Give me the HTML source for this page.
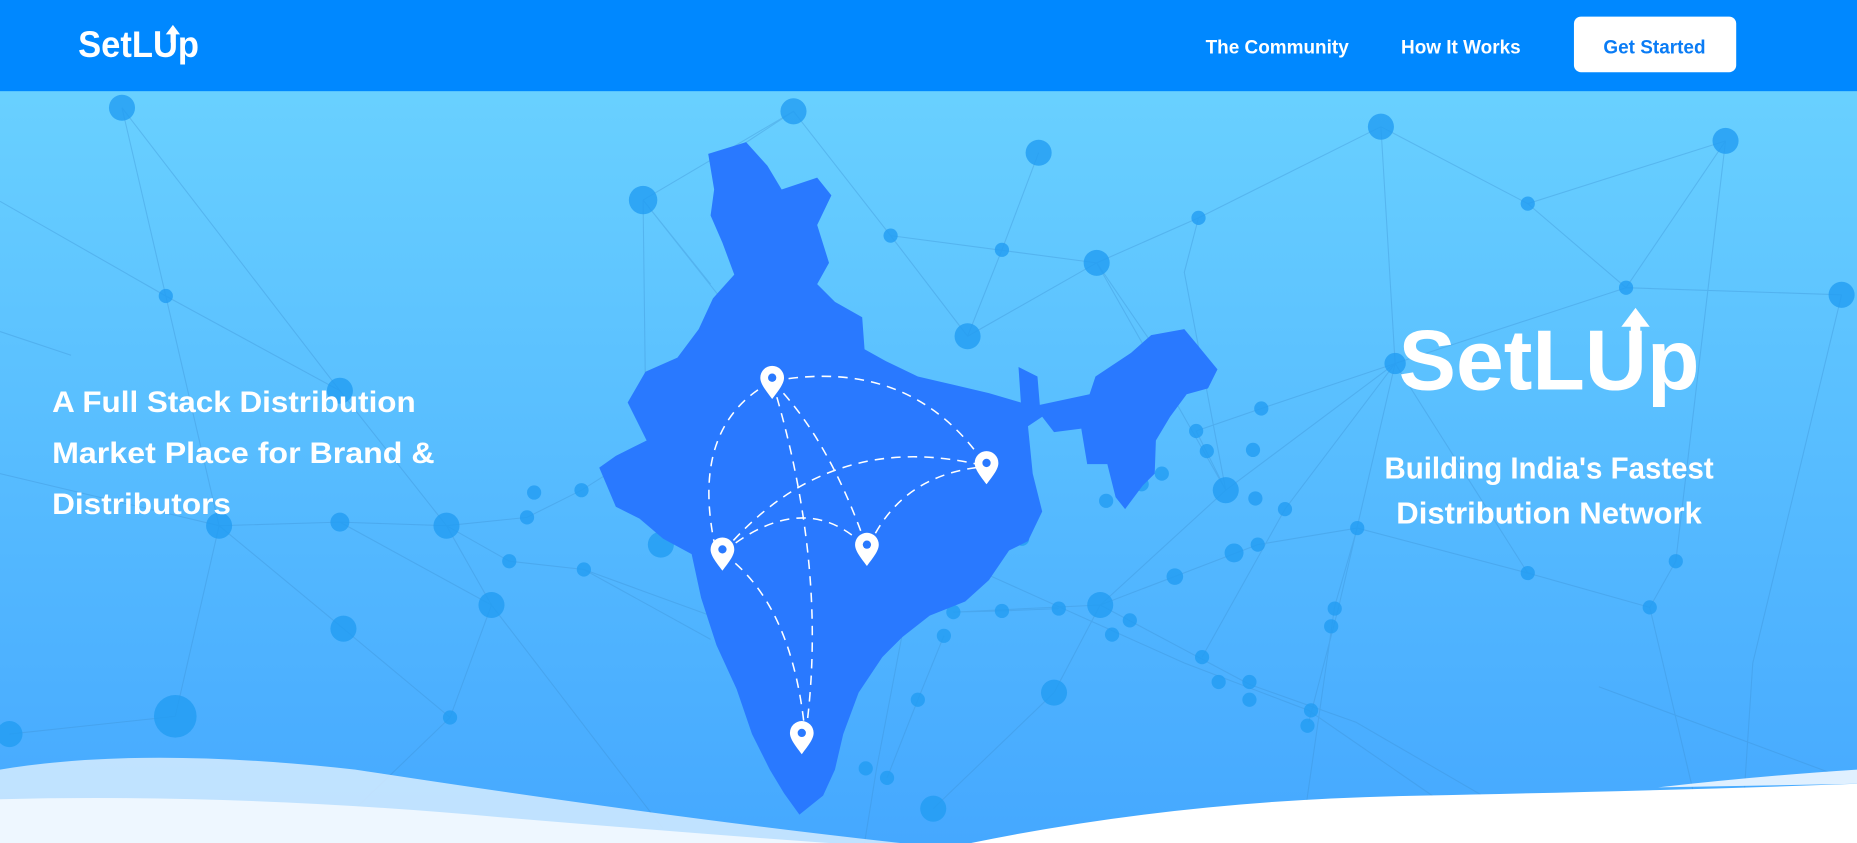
<!DOCTYPE html>
<html><head><meta charset="utf-8"><style>
html,body{margin:0;padding:0;width:1857px;height:843px;overflow:hidden;background:#fff}
svg{display:block}
text{font-family:"Liberation Sans",sans-serif;font-weight:bold;fill:#fff}
</style></head><body>
<svg width="1857" height="843" viewBox="0 0 1568 712" preserveAspectRatio="none">
<defs>
<linearGradient id="bg" x1="0" y1="0" x2="0" y2="1">
<stop offset="0" stop-color="#6dd5ff"/><stop offset="1" stop-color="#45a8ff"/>
</linearGradient>
<g id="pin"><path d="M0,0 C-6,-8 -10,-13 -10,-18 A10,10 0 1 1 10,-18 C10,-13 6,-8 0,0Z" fill="#fff"/><circle cx="0" cy="-18" r="3.5" fill="#2979ff"/></g>
</defs>
<rect x="0" y="0" width="1568" height="712" fill="url(#bg)"/>
<g stroke="#3b8fd0" stroke-opacity="0.35" stroke-width="0.9" fill="none">
<path d="M103,91 L140,250 L185,444 L148,605 M103,91 L287,330 L377,444 M0,170 L140,250 M140,250 L287,330 M543,169 L670,94 L752,199 L817,284 L926,222 L1012,184 L1166,107 L1290,172 L1457,119 M543,169 L545,330 M543,169 L615,260 M543,169 L600,240 M877,129 L846,211 L817,284 M752,199 L926,222 M926,222 L1035,414 M926,222 L1000,330 M1166,107 L1178,307 L1373,243 L1457,119 M1290,172 L1373,243 L1555,249 M1373,243 L1178,307 M1178,307 L1035,414 L929,511 L890,585 L788,683 M1178,307 L1085,430 L1015,555 M1178,307 L1290,484 L1393,513 L1415,474 L1457,119 M1178,307 L1130,514 L1105,610 M1178,307 L1065,345 L1010,364 L1035,414 M377,444 L445,437 L491,414 L545,380 M377,444 L430,474 L493,481 L600,540 M377,444 L415,511 L380,606 L270,712 M185,444 L287,441 L377,444 M185,444 L290,531 L380,606 M0,400 L185,444 M8,620 L148,605 M929,511 L1062,460 L1146,446 L1290,484 M929,511 L805,517 L846,516 L894,514 M929,511 L1055,578 L1145,610 L1300,700 M822,480 L1000,560 L1105,600 L1250,700 M765,519 L740,650 L730,712 M797,537 L775,591 L749,657 M0,280 L60,300 M1415,474 L1393,513 L1440,712 M1555,249 L1480,560 L1470,712 M1146,446 L1127,512 L1100,700 M1012,184 L1000,230 L1035,414 M287,441 L415,511 L560,700 M493,481 L600,520 M1565,660 L1350,580 M670,94 L600,140"/>
</g>
<g fill="#229cf2" fill-opacity="0.8">
<circle cx="103" cy="91" r="11"/><circle cx="670" cy="94" r="11"/><circle cx="877" cy="129" r="11"/><circle cx="1166" cy="107" r="11"/><circle cx="1457" cy="119" r="11"/><circle cx="543" cy="169" r="12"/><circle cx="752" cy="199" r="6"/><circle cx="846" cy="211" r="6"/><circle cx="1012" cy="184" r="6"/><circle cx="1290" cy="172" r="6"/><circle cx="926" cy="222" r="11"/><circle cx="140" cy="250" r="6"/><circle cx="1373" cy="243" r="6"/><circle cx="1555" cy="249" r="11"/><circle cx="817" cy="284" r="11"/><circle cx="287" cy="330" r="11"/><circle cx="1178" cy="307" r="9"/><circle cx="1065" cy="345" r="6"/><circle cx="1010" cy="364" r="6"/><circle cx="1019" cy="381" r="6"/><circle cx="1058" cy="380" r="6"/><circle cx="1035" cy="414" r="11"/><circle cx="1060" cy="421" r="6"/><circle cx="1085" cy="430" r="6"/><circle cx="981" cy="400" r="6"/><circle cx="964" cy="409" r="6"/><circle cx="934" cy="423" r="6"/><circle cx="451" cy="416" r="6"/><circle cx="491" cy="414" r="6"/><circle cx="445" cy="437" r="6"/><circle cx="377" cy="444" r="11"/><circle cx="287" cy="441" r="8"/><circle cx="185" cy="444" r="11"/><circle cx="1146" cy="446" r="6"/><circle cx="558" cy="460" r="11"/><circle cx="430" cy="474" r="6"/><circle cx="493" cy="481" r="6"/><circle cx="1062" cy="460" r="6"/><circle cx="1042" cy="467" r="8"/><circle cx="1415" cy="474" r="6"/><circle cx="1290" cy="484" r="6"/><circle cx="822" cy="480" r="11"/><circle cx="992" cy="487" r="7"/><circle cx="863" cy="455" r="6"/><circle cx="415" cy="511" r="11"/><circle cx="929" cy="511" r="11"/><circle cx="894" cy="514" r="6"/><circle cx="846" cy="516" r="6"/><circle cx="805" cy="517" r="6"/><circle cx="765" cy="519" r="9"/><circle cx="954" cy="524" r="6"/><circle cx="1127" cy="514" r="6"/><circle cx="1393" cy="513" r="6"/><circle cx="1124" cy="529" r="6"/><circle cx="290" cy="531" r="11"/><circle cx="797" cy="537" r="6"/><circle cx="939" cy="536" r="6"/><circle cx="1015" cy="555" r="6"/><circle cx="1029" cy="576" r="6"/><circle cx="1055" cy="576" r="6"/><circle cx="1055" cy="591" r="6"/><circle cx="890" cy="585" r="11"/><circle cx="775" cy="591" r="6"/><circle cx="148" cy="605" r="18"/><circle cx="380" cy="606" r="6"/><circle cx="1107" cy="600" r="6"/><circle cx="1104" cy="613" r="6"/><circle cx="8" cy="620" r="11"/><circle cx="731" cy="649" r="6"/><circle cx="749" cy="657" r="6"/><circle cx="788" cy="683" r="11"/>
</g>
<path fill="#2979ff" d="M598,130 L630,120 L648,140 L660,160 L690,150 L702,165 L690,190 L700,222 L690,240 L705,255 L728,268 L730,295 L748,305 L775,318 L805,325 L835,332 L862,340 L860,310 L876,318 L878,342 L920,333 L925,318 L955,298 L972,283 L1000,278 L1010,290 L1028,312 L1020,328 L1002,333 L988,352 L976,372 L975,400 L965,410 L950,430 L942,420 L935,392 L918,392 L913,362 L890,365 L880,352 L868,360 L872,400 L880,432 L868,457 L852,465 L835,490 L815,508 L785,520 L762,538 L745,555 L725,585 L712,620 L705,650 L695,672 L675,688 L662,670 L650,650 L635,620 L622,582 L605,545 L592,505 L584,468 L560,455 L540,438 L520,428 L506,395 L520,385 L546,372 L530,340 L545,314 L572,302 L590,278 L602,252 L620,232 L610,205 L600,182 L603,160 Z"/>
<g stroke="#fff" stroke-width="1.3" fill="none" stroke-dasharray="8,6">
<path d="M652,322 Q770,300 833,394"/><path d="M652,322 Q580,360 605,467"/><path d="M652,322 Q700,370 732,463"/><path d="M652,322 Q700,480 680,622"/><path d="M610,467 Q700,360 833,394"/><path d="M610,467 Q680,410 732,463"/><path d="M733,463 Q760,400 833,394"/><path d="M610,467 Q670,510 680,622"/>
</g>
<use href="#pin" x="652" y="337"/><use href="#pin" x="833" y="409"/><use href="#pin" x="610" y="482"/><use href="#pin" x="732" y="478"/><use href="#pin" x="677" y="637"/>
<path d="M0,650 Q120,630 300,650 Q560,690 760,712 L0,712Z" fill="#d6ecff" fill-opacity="0.85"/>
<path d="M0,675 Q200,670 420,690 Q600,705 700,712 L0,712Z" fill="#eef7ff"/>
<path d="M820,712 Q1000,675 1200,672 Q1400,668 1568,662 L1568,712Z" fill="#fff"/>
<path d="M1400,665 Q1490,655 1568,650 L1568,662Z" fill="#e0f0ff"/>
<rect x="0" y="0" width="1568" height="77" fill="#0088ff"/>
<text x="66" y="48" font-size="31" textLength="102" lengthAdjust="spacingAndGlyphs">SetLUp</text>
<path d="M146,21 L140,29 L144,29 L144,36 L148,36 L148,29 L152,29Z" fill="#fff"/>
<text x="1018" y="45" font-size="16">The Community</text>
<text x="1183" y="45" font-size="16">How It Works</text>
<rect x="1329" y="14" width="137" height="47" rx="6" fill="#fff"/>
<text x="1397" y="45" font-size="16" text-anchor="middle" style="fill:#0a7cf5">Get Started</text>
<text x="44" y="348" font-size="25" textLength="307" lengthAdjust="spacingAndGlyphs">A Full Stack Distribution</text>
<text x="44" y="391" font-size="25" textLength="323" lengthAdjust="spacingAndGlyphs">Market Place for Brand &amp;</text>
<text x="44" y="434" font-size="25" textLength="151" lengthAdjust="spacingAndGlyphs">Distributors</text>
<text x="1181" y="329" font-size="72" textLength="254" lengthAdjust="spacingAndGlyphs">SetLUp</text>
<path d="M1381,260 L1369,276 L1377,276 L1377,292 L1385,292 L1385,276 L1393,276Z" fill="#fff"/>
<text x="1308" y="404" font-size="26" text-anchor="middle" textLength="278" lengthAdjust="spacingAndGlyphs">Building India's Fastest</text>
<text x="1308" y="442" font-size="26" text-anchor="middle" textLength="258" lengthAdjust="spacingAndGlyphs">Distribution Network</text>
</svg>
</body></html>
